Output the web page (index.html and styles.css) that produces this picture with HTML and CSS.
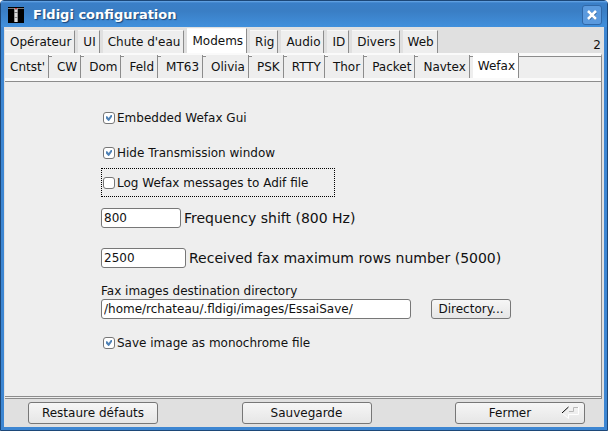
FILE: index.html
```html
<!DOCTYPE html>
<html lang="fr">
<head>
<meta charset="utf-8">
<title>Fldigi configuration</title>
<link rel="stylesheet" href="styles.css">
</head>
<body>
<main class="window">
  <header class="titlebar">
    <svg class="logo" width="16" height="16" viewBox="0 0 16 16" shape-rendering="crispEdges" aria-hidden="true">
      <rect width="16" height="16" fill="#000"/>
      <rect x="0" y="1" width="16" height="1" fill="#777"/>
      <rect x="6" y="1" width="4" height="14" fill="#999"/>
      <rect x="7" y="3" width="2" height="12" fill="#ddd"/>
      <rect x="7" y="1" width="2" height="1" fill="#d33"/>
      <rect x="6" y="5" width="4" height="1" fill="#777"/>
      <rect x="6" y="10" width="4" height="1" fill="#888"/>
    </svg>
    <h1>Fldigi configuration</h1>
    <button class="close" type="button" aria-label="Fermer la fenêtre">
      <svg width="12" height="12" viewBox="0 0 12 12" aria-hidden="true">
        <path d="M3 3l7 7M10 3l-7 7" stroke="#1d4f86" stroke-width="2.6"/>
        <path d="M2 2l8 8M10 2l-8 8" stroke="#fff" stroke-width="2.6"/>
      </svg>
    </button>
  </header>
  <div class="body">
    <nav class="tabs main-tabs">
      <button type="button">Opérateur</button>
      <button type="button">UI</button>
      <button type="button">Chute d'eau</button>
      <button type="button" class="active">Modems</button>
      <button type="button">Rig</button>
      <button type="button">Audio</button>
      <button type="button">ID</button>
      <button type="button">Divers</button>
      <button type="button">Web</button>
      <span class="count">2</span>
    </nav>
    <section class="page">
      <nav class="tabs sub-tabs">
        <button type="button">Cntst'</button>
        <button type="button">CW</button>
        <button type="button">Dom</button>
        <button type="button">Feld</button>
        <button type="button">MT63</button>
        <button type="button">Olivia</button>
        <button type="button">PSK</button>
        <button type="button">RTTY</button>
        <button type="button">Thor</button>
        <button type="button">Packet</button>
        <button type="button">Navtex</button>
        <button type="button" class="active">Wefax</button>
      </nav>
      <form class="panel" id="wefax">
        <label class="check"><input type="checkbox" checked>Embedded Wefax Gui</label>
        <label class="check"><input type="checkbox" checked>Hide Transmission window</label>
        <label class="check focused"><input type="checkbox">Log Wefax messages to Adif file</label>
        <div class="field">
          <input class="shift" id="shift" type="text" value="800">
          <label for="shift">Frequency shift (800 Hz)</label>
        </div>
        <div class="field">
          <input class="rows" id="rows" type="text" value="2500">
          <label for="rows">Received fax maximum rows number (5000)</label>
        </div>
        <label class="caption" for="dir">Fax images destination directory</label>
        <div class="directory">
          <input id="dir" type="text" value="/home/rchateau/.fldigi/images/EssaiSave/">
          <button class="push" type="button">Directory...</button>
        </div>
        <label class="check"><input type="checkbox" checked>Save image as monochrome file</label>
      </form>
    </section>
    <footer class="actions">
      <button class="push" type="button">Restaure défauts</button>
      <button class="push" type="button">Sauvegarde</button>
      <button class="push enter" type="button">Fermer
        <svg width="18" height="14" viewBox="0 0 18 14" fill="none" aria-hidden="true">
          <path d="M17.500 1V8.500H7.500V12.500L1 7" stroke="#fff"/>
          <path d="M17 1.500H12.500V5.500H8" stroke="#b8b8b8"/>
          <path d="M7.500 1L1 7" stroke="#000"/>
        </svg>
      </button>
    </footer>
  </div>
</main>
</body>
</html>
```
FILE: styles.css
```css
* { box-sizing: border-box; }

body {
  margin: 0;
  font: 12px/16px "DejaVu Sans", sans-serif;
  color: #111;
}

button, input { font: inherit; color: inherit; margin: 0; }

.window {
  display: flex;
  flex-direction: column;
  min-height: 100vh;
  padding: 0 3px 3px;
  background: #3d86d2;
  border: 1px solid #1c4778;
  border-radius: 4px 4px 0 0;
}

.titlebar {
  display: flex;
  align-items: center;
  height: 26px;
  margin: 0 -3px;
  padding: 2px 5px 0 7px;
  background: linear-gradient(#6aaaea 0, #3a7fc8 2px, #3a7ec4 10px, #4190dc 100%);
}

.titlebar h1 {
  flex: 1;
  margin: 0 0 0 9px;
  font-size: 13px;
  line-height: 18px;
  color: #fff;
  text-shadow: 1px 1px 1px #1d4577;
}

.close {
  display: grid;
  place-items: center;
  width: 20px;
  height: 20px;
  padding: 0;
  background: #5b9ade;
  border: 1px solid #3068a8;
  border-radius: 3px;
}

.body {
  flex: 1;
  display: flex;
  flex-direction: column;
  background: #e0e0e0;
}

.tabs { display: flex; align-items: flex-end; }

.tabs button {
  padding: 0 3px 0 5px;
  background: #eee;
  border: 0;
  border-right: 1px solid #8c8c8c;
}

.tabs .active { background: #fff; }

.main-tabs { gap: 3px; height: 26px; padding: 0 3px 0 1px; }
.main-tabs button { height: 23px; border-top: 1px solid #f8f8f8; }
.main-tabs .active { height: 25px; }

.count { margin-left: auto; }

.page {
  flex: 1;
  display: flex;
  flex-direction: column;
  margin: 0 2px 0 1px;
  background: #eee;
  border-top: 3px solid #fafafa;
  border-right: 1px solid #8c8c8c;
  border-bottom: 1px solid #8c8c8c;
}

.sub-tabs {
  gap: 3px;
  height: 22px;
  background: linear-gradient(#8c8c8c, #8c8c8c) 0 0 / 100% 1px no-repeat;
}
.sub-tabs button { height: 23px; margin-top: -1px; }
.sub-tabs .active { height: 25px; }

.panel {
  flex: 1;
  display: flex;
  flex-direction: column;
  align-items: flex-start;
  margin-bottom: 1px;
  padding: 29px 90px 0 96px;
  border-top: 3px solid #fafafa;
  border-bottom: 1px solid #8c8c8c;
  box-shadow: inset 0 1px #8c8c8c;
}

.check { display: flex; align-items: center; gap: 2px; padding-left: 2px; }
.check + .check { margin-top: 19px; }

.check.focused {
  width: 234px;
  height: 29px;
  padding-left: 1px;
  border: 1px dotted #000;
}
.check + .check.focused { margin-top: 7px; }

.check input {
  appearance: none;
  position: relative;
  width: 12px;
  height: 12px;
  background: #fff;
  border: 1px solid #777;
  border-radius: 3px;
}

.check input:checked::after {
  content: "";
  position: absolute;
  inset: 2px;
  background: #4f82b6;
  clip-path: polygon(0 20%, 20% 20%, 45% 50%, 80% 0, 100% 0, 100% 30%, 50% 100%, 40% 100%, 0 60%);
}

.field { display: flex; align-items: center; gap: 3px; margin-top: 11px; }
.field + .field { margin-top: 20px; }
.field label { font-size: 14px; line-height: 20px; }

input[type="text"] {
  height: 20px;
  padding: 0 2px;
  background: #fff;
  border: 1px solid #777;
  border-radius: 3px;
}

.shift { width: 80px; }
.rows { width: 85px; }

.caption { margin-top: 15px; }

.directory { display: flex; gap: 20px; }
.directory input { width: 310px; }
.directory .push { width: 80px; }

.directory + .check { margin-top: 16px; }

.push {
  height: 20px;
  padding: 0;
  background: linear-gradient(#f6f6f6, #e6e6e6);
  border: 1px solid #777;
  border-radius: 3px;
}

.actions {
  display: grid;
  grid-template-columns: repeat(3, 130px);
  justify-content: space-between;
  padding: 3px 19px 3px 24px;
}
.actions .push { height: 22px; }

.enter { position: relative; padding-right: 20px; }
.enter svg { position: absolute; right: 5px; top: 3px; }
```
